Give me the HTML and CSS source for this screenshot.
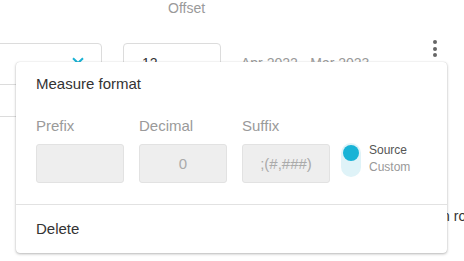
FILE: index.html
```html
<!DOCTYPE html>
<html>
<head>
<meta charset="utf-8">
<link rel="stylesheet" href="styles.css">
</head>
<body>
<div class="page">
  <div class="offset-label">Offset</div>
  <div class="toolbar">
    <div class="select">
      <svg class="chev" width="12" height="8" viewBox="0 0 12 8"><path d="M1 1.2 L6 6 L11 1.2" fill="none" stroke="#19b2d4" stroke-width="2"/></svg>
    </div>
    <div class="num">12</div>
    <div class="range">Apr 2022 - Mar 2023</div>
    <div class="dots"><span></span><span></span><span></span></div>
  </div>
  <div class="row-line"></div>
  <div class="rows-text">in rows</div>
</div>

<div class="popup">
  <div class="title">Measure format</div>
  <div class="fields">
    <div class="field">
      <div class="label">Prefix</div>
      <div class="box"></div>
    </div>
    <div class="field">
      <div class="label">Decimal</div>
      <div class="box">0</div>
    </div>
    <div class="field">
      <div class="label">Suffix</div>
      <div class="box">;(#,###)</div>
    </div>
    <div class="toggle-group">
      <div class="track"><div class="knob"></div></div>
      <div class="opts">
        <div class="opt on">Source</div>
        <div class="opt">Custom</div>
      </div>
    </div>
  </div>
  <div class="divider"></div>
  <div class="delete">Delete</div>
</div>
</body>
</html>
```

FILE: styles.css
```css
* { box-sizing: border-box; }
html, body {
  margin: 0;
  padding: 0;
  width: 464px;
  height: 261px;
  overflow: hidden;
  background: #fff;
  font-family: "Liberation Sans", Arial, sans-serif;
}
.page {
  position: relative;
  width: 464px;
  height: 261px;
}
.offset-label {
  margin-left: 168px;
  font-size: 14px;
  line-height: 16px;
  color: #9a9a9a;
}
.toolbar {
  display: flex;
  align-items: flex-start;
  margin-top: 27px;
}
.select {
  margin-left: -8px;
  width: 110px;
  height: 42px;
  border: 1px solid #dcdcdc;
  border-radius: 4px;
  display: flex;
  justify-content: flex-end;
  align-items: flex-start;
  padding: 13px 17px 0 0;
}
.chev { display: block; }
.num {
  margin-left: 21px;
  width: 98px;
  height: 42px;
  border: 1px solid #dcdcdc;
  border-radius: 4px;
  padding: 11px 0 0 18px;
  font-size: 14px;
  line-height: 16px;
  color: #333;
}
.range {
  margin-left: 20px;
  padding-top: 12px;
  font-size: 14px;
  line-height: 16px;
  color: #9a9a9a;
}
.dots {
  margin-left: auto;
  margin-right: 27px;
  margin-top: -3px;
  display: flex;
  flex-direction: column;
  gap: 2.7px;
}
.dots span {
  width: 4px;
  height: 4px;
  border-radius: 50%;
  background: #666;
}
.row-line {
  margin-top: 31px;
  margin-left: 0;
  width: 102px;
  height: 1px;
  background: #dcdcdc;
}
.rows-text {
  margin-top: 91px;
  padding-left: 439px;
  font-size: 14px;
  line-height: 16px;
  color: #333;
  white-space: nowrap;
}

.popup {
  position: absolute;
  left: 16px;
  top: 62px;
  width: 431px;
  height: 191px;
  background: #fff;
  border-radius: 4px;
  box-shadow: 0 1px 3px rgba(0,0,0,0.28), 0 0 1px rgba(0,0,0,0.18);
  padding-top: 13px;
  display: flex;
  flex-direction: column;
}
.title {
  padding: 0 20px;
  font-size: 15px;
  line-height: 18px;
  color: #333;
}
.fields {
  display: flex;
  align-items: flex-start;
  margin-top: 24px;
  padding: 0 20px;
}
.field {
  display: flex;
  flex-direction: column;
  margin-right: 15px;
}
.field:nth-child(3) { margin-right: 11px; }
.label {
  font-size: 15px;
  line-height: 18px;
  color: #9a9a9a;
}
.box {
  margin-top: 9px;
  width: 88px;
  height: 39px;
  background: #eeeeee;
  border: 1px solid #e2e2e2;
  border-radius: 3px;
  display: flex;
  align-items: center;
  justify-content: center;
  font-size: 15px;
  color: #aaa;
}
.toggle-group {
  margin-top: 26px;
  display: flex;
  align-items: flex-start;
}
.track {
  width: 20px;
  height: 34px;
  border-radius: 10px;
  background: #dff3f8;
  padding: 2px;
}
.knob {
  width: 16px;
  height: 16px;
  border-radius: 50%;
  background: #18b3d6;
}
.opts {
  margin-left: 8px;
  margin-top: -1px;
  display: flex;
  flex-direction: column;
}
.opt {
  font-size: 12px;
  line-height: 17px;
  color: #999;
}
.opt.on { color: #555; }
.divider {
  margin-top: 21px;
  height: 1px;
  background: #e2e2e2;
}
.delete {
  padding: 15px 20px;
  font-size: 15px;
  line-height: 18px;
  color: #333;
}
```
